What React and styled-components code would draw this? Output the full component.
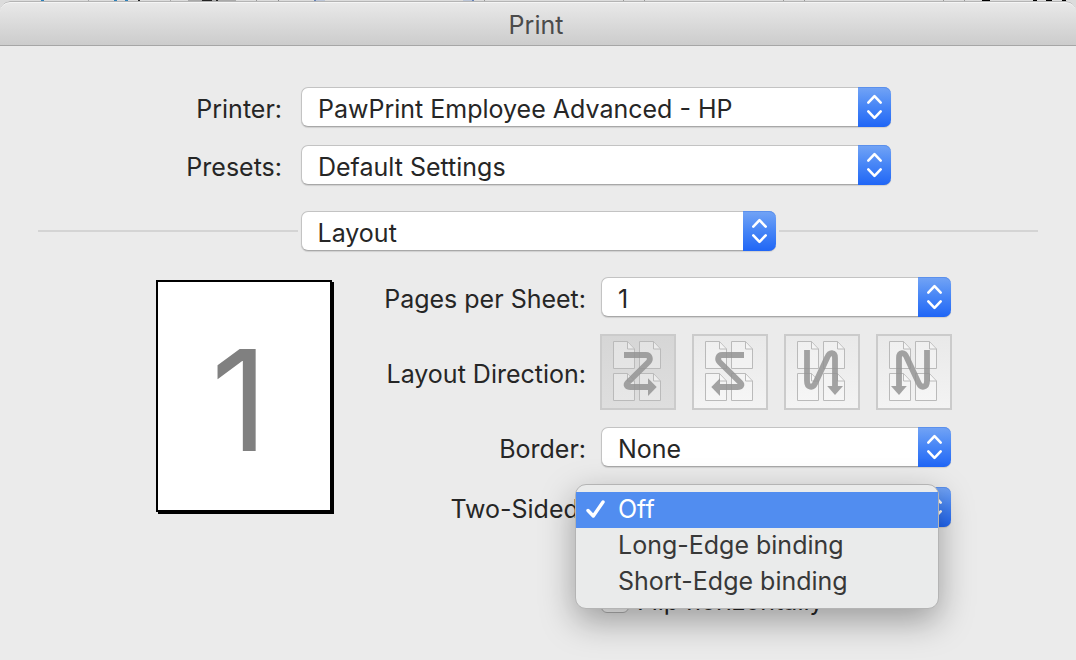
import React, { useId, useState } from "react";
import styled, { createGlobalStyle } from "styled-components";

const GlobalStyle = createGlobalStyle`
  * { box-sizing: border-box; }
  body {
    margin: 0;
    background: #ebebeb;
    color: #262626;
    font-family: Inter, "Liberation Sans", sans-serif;
    font-size: 25px;
    line-height: 40px;
  }
`;

const Desktop = styled.div`
  position: relative;
  min-height: 100vh;
  background: #dcdcdc;
  padding-top: 1px;
  display: flex;
  overflow: hidden;
`;

const Backdrop = styled.svg`
  position: absolute;
  top: 0;
  left: 0;
  width: 100%;
  height: 12px;
`;

const Dialog = styled.form`
  position: relative;
  flex: 1;
  min-width: 0;
  display: flex;
  flex-direction: column;
  border-radius: 10px 10px 0 0;
  background: #ebebeb;
  overflow: hidden;
`;

const TitleBar = styled.header`
  height: 45px;
  border-top: 1px solid #b4b4b4;
  border-bottom: 1px solid #a6a6a6;
  border-radius: 10px 10px 0 0;
  background: linear-gradient(#e9e9e9, #cccccc);
  box-shadow: inset 0 1px #f5f5f5;
  text-align: center;
`;

const Title = styled.h1`
  margin: 0;
  padding: 3px 4px 0 0;
  font-size: 25px;
  font-weight: 400;
  color: #4b4b4b;
`;

const Content = styled.div`
  flex: 1;
  padding: 41px 38px 46px;
`;

const PrinterFields = styled.div`
  display: grid;
  grid-template-columns: 244px minmax(0, 590px);
  column-gap: 19px;
  row-gap: 18px;
`;

const FieldLabel = styled.label`
  padding-top: 2px;
  height: 40px;
  text-align: right;
  white-space: nowrap;
`;

const GroupLabel = styled.span`
  padding-top: 4px;
  text-align: right;
  white-space: nowrap;
`;

const SelectFrame = styled.div`
  display: flex;
  height: 40px;
  border-radius: 7px;
  background: #ffffff;
  border: 1px solid #c3c3c3;
  border-bottom-color: #a8a8a8;
  border-right: 0;
  box-shadow: 0 1px 1px rgba(0, 0, 0, 0.12);
  position: relative;
`;

const NativeSelect = styled.select`
  appearance: none;
  width: 100%;
  border: 0;
  background: transparent;
  border-radius: 7px;
  padding: 5px 40px 0 16px;
  font: inherit;
  line-height: 33px;
  color: inherit;
  outline: none;
`;

const Stepper = styled.span`
  position: absolute;
  top: -1px;
  right: 0;
  bottom: -1px;
  width: 33px;
  border-radius: 0 7px 7px 0;
  background: linear-gradient(#73a4f5, #4685f6 50%, #2066f6);
  box-shadow: inset 0 1px #5b90ec;
  pointer-events: none;
`;

const SectionRow = styled.div`
  display: grid;
  grid-template-columns: minmax(0, 1fr) 475px minmax(0, 1fr);
  align-items: center;
  gap: 3px;
  margin-top: 26px;
`;

const Rule = styled.hr`
  width: 100%;
  height: 2px;
  margin: 0;
  border: 0;
  background: #d4d4d4;
`;

const LayoutPane = styled.div`
  display: grid;
  grid-template-columns: 176px minmax(0, 619px);
  margin-top: 26px;
  padding-left: 118px;
`;

const PagePreview = styled.div`
  display: flex;
  align-items: center;
  justify-content: center;
  height: 232px;
  margin-top: 3px;
  padding: 8px 9px 0 0;
  border: 2px solid #000000;
  background: #ffffff;
  box-shadow: 2px 2px #000000;
  color: #808080;
  font-size: 140px;
  line-height: 140px;
`;

const LayoutFields = styled.div`
  display: grid;
  grid-template-columns: 254px minmax(0, 1fr);
  column-gap: 15px;
  row-gap: 17px;
  align-items: center;
`;

const DirectionGroup = styled.div`
  display: flex;
  gap: 16px;
  margin-left: -1px;
`;

const DirectionTile = styled.label`
  display: block;
  width: 76px;
  height: 76px;
  border: 2px solid #cbcbcb;
  background: ${(p) =>
    p.$selected
      ? "linear-gradient(#d6d6d6, #dedede)"
      : "linear-gradient(#e9e9e9, #f3f3f3)"};
`;

const HiddenRadio = styled.input`
  appearance: none;
  position: absolute;
  width: 1px;
  height: 1px;
  margin: 0;
  opacity: 0;
`;

const DirectionArt = styled.svg`
  display: block;
  width: 76px;
  height: 76px;
  margin: -2px;
`;

const PopupField = styled.div`
  position: relative;
`;

const PopupRow = styled.div`
  grid-column: 1 / 3;
  display: grid;
  grid-template-columns: subgrid;
  margin-top: 3px;
`;

const Menu = styled.div`
  position: absolute;
  z-index: 2;
  top: -3px;
  left: -26px;
  right: 12px;
  padding: 7px 0 8px;
  border: 1px solid #b4b4b4;
  border-radius: 11px;
  background: #eaebeb;
  box-shadow: 0 12px 34px rgba(0, 0, 0, 0.34);
`;

const MenuItem = styled.button`
  display: grid;
  grid-template-columns: 42px 1fr;
  width: 100%;
  height: 36px;
  padding: 0;
  border: 0;
  background: ${(p) => (p.$selected ? "#518df0" : "transparent")};
  color: ${(p) => (p.$selected ? "#ffffff" : "#383838")};
  font: inherit;
  line-height: 34px;
  text-align: left;
`;

const CheckRow = styled.label`
  grid-column: 2;
  display: flex;
  align-items: center;
  gap: 8px;
  margin-top: 33px;
`;

const CheckText = styled.span`
  padding-top: 4px;
`;

const Checkbox = styled.input`
  appearance: none;
  width: 28px;
  height: 28px;
  margin: 0;
  border: 1px solid #b5b5b5;
  border-radius: 6px;
  background: #ffffff;
`;

function PopupSelect({ id, options, label }) {
  return (
    <SelectFrame>
      <NativeSelect id={id} aria-label={label} defaultValue={options[0]}>
        {options.map((o) => (
          <option key={o}>{o}</option>
        ))}
      </NativeSelect>
      <Stepper>
        <svg width="33" height="40" viewBox="0 0 33 40" fill="none" stroke="#fff" strokeWidth="2.6" strokeLinecap="round" strokeLinejoin="round" aria-hidden="true">
          <path d="M10.3 15.6 16.5 9.2l6.2 6.4M10.3 24.4l6.2 6.4 6.2-6.4" />
        </svg>
      </Stepper>
    </SelectFrame>
  );
}

const Z_FLOW = {
  line: "M24 21H46C50 21 51 25.5 48.3 28.2L28 48.2C25.2 51 27 53 30.5 53H49",
  head: "M48 44.3 56.7 53 48 62Z",
};
const N_FLOW = {
  line: "M23 16V47C23 54 29 54.4 31.3 49.2L43.2 23.5C45.7 17.4 51 18 51 24V53",
  head: "M43.2 52H59L51 61Z",
};
const DIRECTIONS = [
  { name: "Left to right, then down", art: Z_FLOW },
  { name: "Right to left, then down", art: Z_FLOW, flip: 76 },
  { name: "Top to bottom, then right", art: N_FLOW },
  { name: "Top to bottom, then left", art: N_FLOW, flip: 74 },
];

function DirectionIcon({ art, flip }) {
  return (
    <DirectionArt viewBox="0 0 76 76" aria-hidden="true">
      {[[13.5, 7.5], [39.5, 7.5], [13.5, 39.5], [39.5, 39.5]].map(([x, y]) => (
        <g key={`${x}-${y}`} transform={`translate(${x} ${y})`} fill="#fff" fillOpacity="0.3" stroke="#bababa">
          <path d="M0 0H14L21 7.5V27H0Z" />
          <path d="M14 0V7.5H21" />
        </g>
      ))}
      <g opacity="0.85" transform={flip ? `translate(${flip} 0) scale(-1 1)` : undefined}>
        <path d={art.line} fill="none" stroke="#949494" strokeWidth="5.8" />
        <path d={art.head} fill="#949494" />
      </g>
    </DirectionArt>
  );
}

const BINDINGS = ["Off", "Long-Edge binding", "Short-Edge binding"];

const BACKDROP_MARKS = [
  [41, 3, "#2b7fb8"], [88, 1, "#a8a8a8"], [114, 3, "#2b7fb8"], [125, 3, "#2b7fb8"],
  [138, 2, "#222"], [170, 1, "#a8a8a8"], [188, 48, "#a9a9a9"], [202, 10, "#222"],
  [216, 2, "#222"], [256, 1, "#999"], [278, 1, "#888"], [314, 11, "#bcc6d8"],
  [314, 2, "#6581b5"], [463, 11, "#bcc6d8"], [472, 2, "#6581b5"], [484, 1, "#999"],
  [623, 1, "#999"], [644, 1, "#999"], [783, 1, "#999"], [804, 1, "#999"],
  [943, 1, "#999"], [964, 1, "#999"], [982, 8, "#000"], [1033, 4, "#000"],
  [1046, 6, "#000"], [1062, 4, "#000"],
];

export default function App() {
  const id = useId();
  const [direction, setDirection] = useState(0);
  const [binding, setBinding] = useState("Off");
  return (
    <Desktop>
      <GlobalStyle />
      <Backdrop aria-hidden="true">
        {BACKDROP_MARKS.map(([x, w, fill]) => (
          <rect key={`${x}-${w}`} x={x} width={w} height="2" fill={fill} />
        ))}
      </Backdrop>
      <Dialog onSubmit={(e) => e.preventDefault()}>
        <TitleBar>
          <Title>Print</Title>
        </TitleBar>
        <Content>
          <PrinterFields>
            <FieldLabel htmlFor={`${id}-printer`}>Printer:</FieldLabel>
            <PopupSelect id={`${id}-printer`} options={["PawPrint Employee Advanced - HP"]} />
            <FieldLabel htmlFor={`${id}-presets`}>Presets:</FieldLabel>
            <PopupSelect id={`${id}-presets`} options={["Default Settings"]} />
          </PrinterFields>
          <SectionRow>
            <Rule />
            <PopupSelect id={`${id}-section`} label="Section" options={["Layout"]} />
            <Rule />
          </SectionRow>
          <LayoutPane>
            <PagePreview>1</PagePreview>
            <LayoutFields>
              <FieldLabel htmlFor={`${id}-pages`}>Pages per Sheet:</FieldLabel>
              <PopupSelect id={`${id}-pages`} options={["1"]} />
              <GroupLabel id={`${id}-direction`}>Layout Direction:</GroupLabel>
              <DirectionGroup role="radiogroup" aria-labelledby={`${id}-direction`}>
                {DIRECTIONS.map((d, i) => (
                  <DirectionTile key={d.name} $selected={i === direction}>
                    <HiddenRadio
                      type="radio"
                      name="direction"
                      aria-label={d.name}
                      checked={i === direction}
                      onChange={() => setDirection(i)}
                    />
                    <DirectionIcon art={d.art} flip={d.flip} />
                  </DirectionTile>
                ))}
              </DirectionGroup>
              <FieldLabel htmlFor={`${id}-border`}>Border:</FieldLabel>
              <PopupSelect id={`${id}-border`} options={["None"]} />
              <PopupRow>
                <FieldLabel htmlFor={`${id}-sided`}>Two-Sided:</FieldLabel>
                <PopupField>
                  <PopupSelect id={`${id}-sided`} options={["Off"]} />
                  <Menu role="menu" aria-label="Two-Sided">
                    {BINDINGS.map((b) => (
                      <MenuItem
                        key={b}
                        type="button"
                        role="menuitemradio"
                        aria-checked={b === binding}
                        $selected={b === binding}
                        onClick={() => setBinding(b)}
                      >
                        <svg width="42" height="36" viewBox="0 0 42 36" fill="none" aria-hidden="true">
                          {b === binding && (
                            <path d="M12 18.5 17.3 24 27 10" stroke="#fff" strokeWidth="3.4" strokeLinecap="round" strokeLinejoin="round" />
                          )}
                        </svg>
                        {b}
                      </MenuItem>
                    ))}
                  </Menu>
                </PopupField>
              </PopupRow>
              <CheckRow>
                <Checkbox type="checkbox" />
                <CheckText>Flip horizontally</CheckText>
              </CheckRow>
            </LayoutFields>
          </LayoutPane>
        </Content>
      </Dialog>
    </Desktop>
  );
}
